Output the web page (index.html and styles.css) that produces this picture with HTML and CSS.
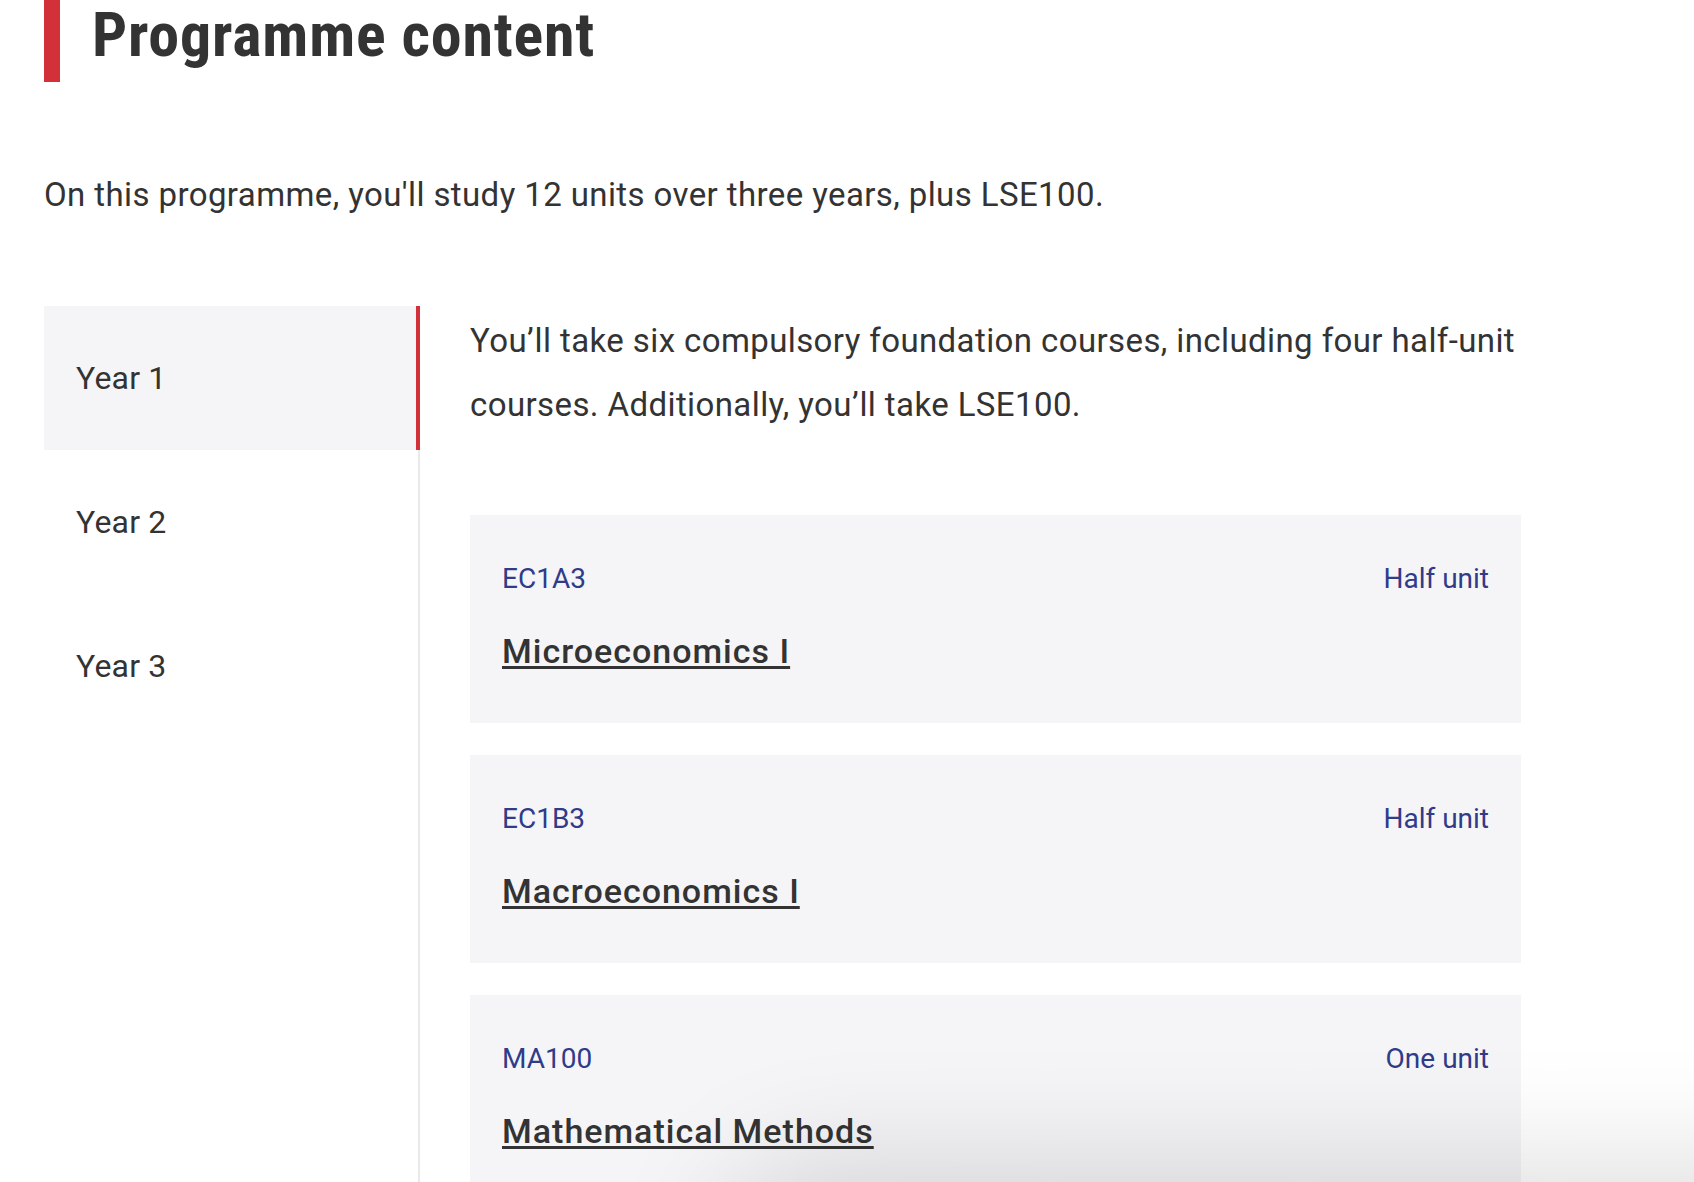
FILE: index.html
```html
<!DOCTYPE html>
<html lang="en">
<head>
<meta charset="utf-8">
<title>Programme content</title>
<link rel="stylesheet" href="styles.css">
</head>
<body>
<main class="page">
  <h2 class="section-title"><span class="section-title-text">Programme content</span></h2>
  <p class="intro">On this programme, you'll study 12 units over three years, plus LSE100.</p>
  <div class="tabs">
    <nav class="tab-list">
      <div class="tab active">Year 1</div>
      <div class="tab">Year 2</div>
      <div class="tab">Year 3</div>
    </nav>
    <section class="tab-panel">
      <p class="panel-intro">You’ll take six compulsory foundation courses, including four half-unit courses. Additionally, you’ll take LSE100.</p>
      <div class="course">
        <div class="course-meta"><span class="course-code">EC1A3</span><span class="course-units">Half unit</span></div>
        <a class="course-title" href="#">Microeconomics I</a>
      </div>
      <div class="course">
        <div class="course-meta"><span class="course-code">EC1B3</span><span class="course-units">Half unit</span></div>
        <a class="course-title" href="#">Macroeconomics I</a>
      </div>
      <div class="course">
        <div class="course-meta"><span class="course-code">MA100</span><span class="course-units">One unit</span></div>
        <a class="course-title" href="#">Mathematical Methods</a>
      </div>
      <div class="course">
        <div class="course-meta"><span class="course-code">ST102</span><span class="course-units">One unit</span></div>
        <a class="course-title" href="#">Elementary Statistical Theory</a>
      </div>
    </section>
  </div>
</main>
<div class="floating-shadow"></div>
</body>
</html>
```
FILE: styles.css
```css
html, body {
  margin: 0;
  padding: 0;
  background: #ffffff;
  overflow: hidden;
}

body {
  font-family: Roboto, "Noto Sans", "Liberation Sans", sans-serif;
  color: #333333;
}

.page {
  width: 1477px;
  margin-left: 44px;
}

.section-title {
  margin: -12px 0 0;
  border-left: 16px solid #d3313a;
  padding-left: 32px;
  font-size: 62px;
  font-weight: 700;
  line-height: 94px;
  color: #333333;
}

.section-title-text {
  display: inline-block;
  font-stretch: 75%;
  letter-spacing: 0.8px;
}

.intro {
  margin: 90px 0 0;
  font-size: 33px;
  line-height: 45px;
  letter-spacing: 0.4px;
}

.tabs {
  display: grid;
  grid-template-columns: 376px 1fr;
  margin-top: 89px;
}

.tab-list {
  border-right: 2px solid #e9e9ec;
  min-height: 900px;
}

.tab {
  height: 144px;
  display: flex;
  align-items: center;
  padding-left: 32px;
  margin-right: -2px;
  font-size: 32px;
  letter-spacing: 0.2px;
  color: #333333;
}

.tab.active {
  background: #f5f5f7;
  border-right: 4px solid #d3313a;
}

.tab-panel {
  padding-left: 50px;
}

.panel-intro {
  margin: 3px 0 78px;
  font-size: 33px;
  line-height: 64px;
  letter-spacing: 0.4px;
}

.course {
  background: #f5f5f7;
  height: 208px;
  box-sizing: border-box;
  padding: 44px 32px 50px;
  margin-bottom: 32px;
}

.course-meta {
  display: flex;
  justify-content: space-between;
  font-size: 28px;
  line-height: 40px;
  color: #303b89;
}

.course-title {
  display: inline-block;
  margin-top: 30px;
  font-size: 34px;
  line-height: 44px;
  font-weight: 500;
  letter-spacing: 1px;
  color: #333333;
  text-decoration: underline;
  text-decoration-thickness: 3px;
  text-underline-offset: 3px;
}

.floating-shadow {
  position: fixed;
  left: 760px;
  top: 1200px;
  width: 1100px;
  height: 300px;
  border-radius: 60px;
  background: #ffffff;
  box-shadow: 0 0 120px 40px rgba(0, 0, 0, 0.13);
}
```
